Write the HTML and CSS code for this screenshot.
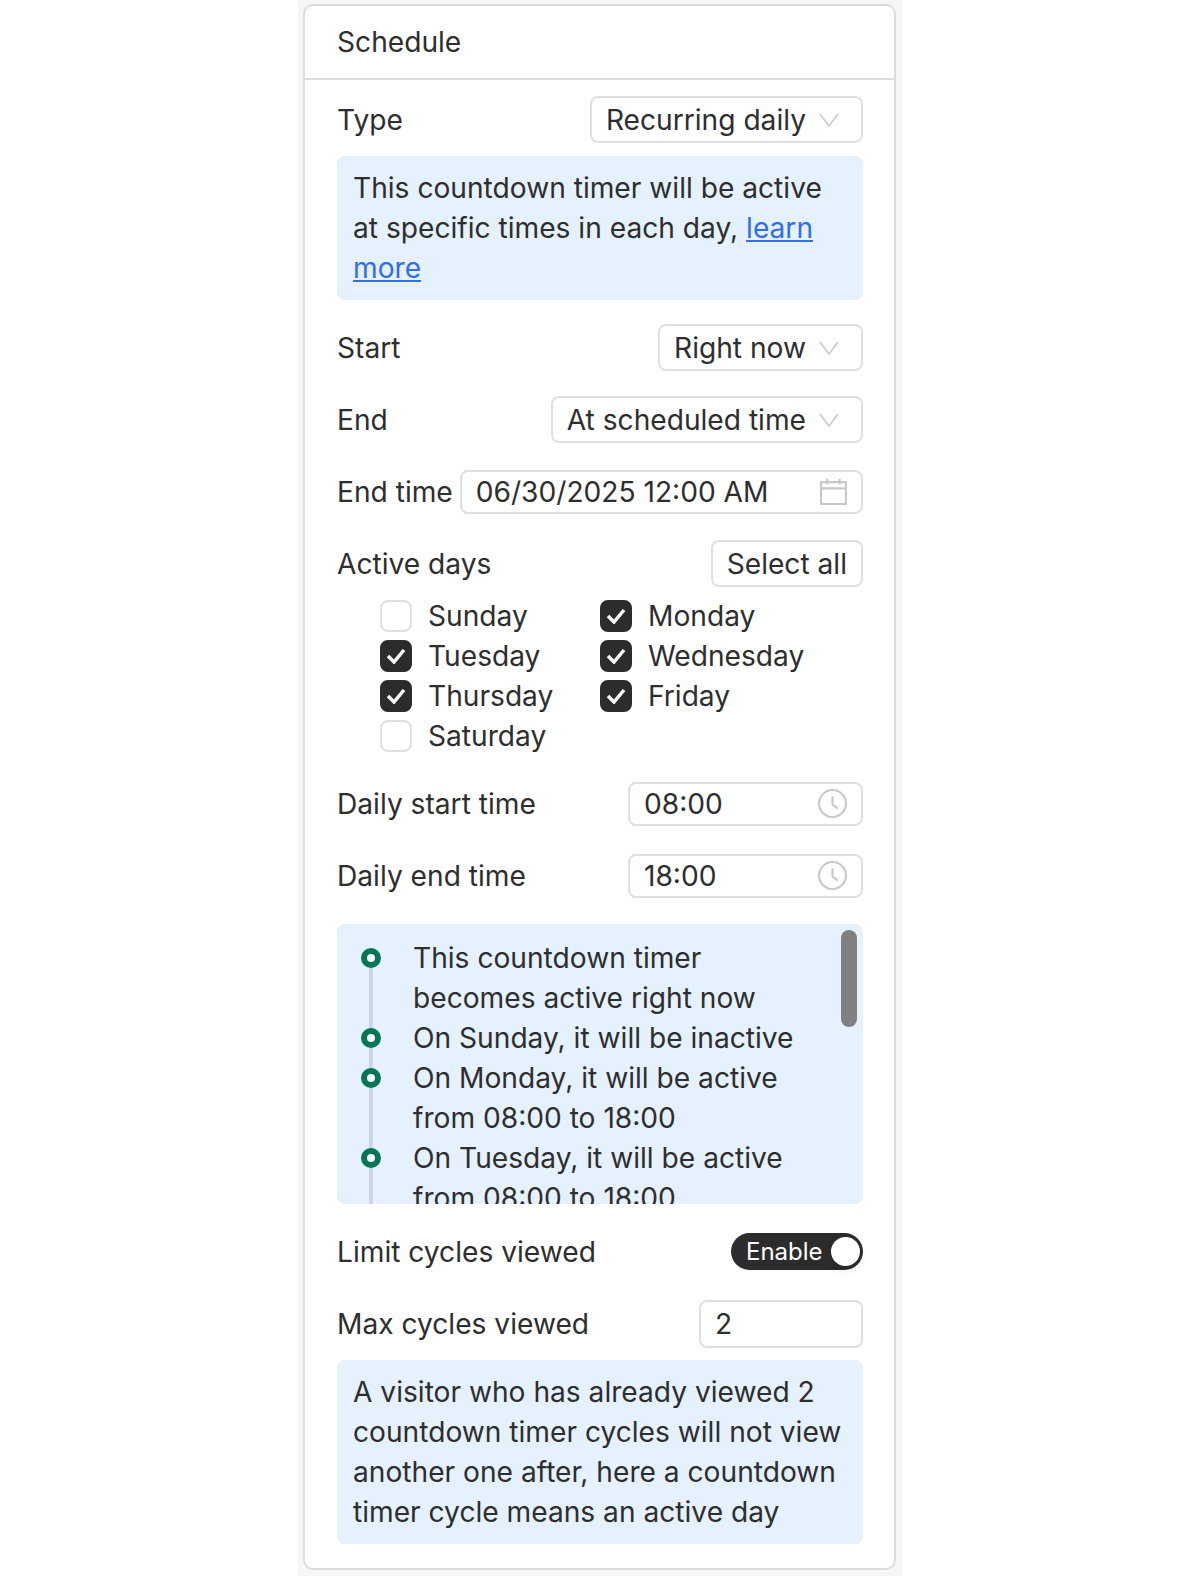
FILE: index.html
```html
<!DOCTYPE html>
<html lang="en">
<head>
    <meta charset="UTF-8">
    <meta name="viewport" content="width=device-width, initial-scale=1.0">
    <title>Schedule</title>
    <link rel="stylesheet" href="styles.css">
</head>
<body>
    <div class="panel">
        <div class="card">
            <div class="card-header">Schedule</div>
            <div class="card-body">
                <div class="row row-tight">
                    <span>Type</span>
                    <div class="field select">
                        <span>Recurring daily</span>
                        <svg class="chevron" viewBox="0 0 20 14"><path d="M1 1l9 12 9-12"/></svg>
                    </div>
                </div>
                <div class="info info-spaced">
                    This countdown timer will be active at specific times in each day, <a href="#">learn more</a>
                </div>
                <div class="row">
                    <span>Start</span>
                    <div class="field select">
                        <span>Right now</span>
                        <svg class="chevron" viewBox="0 0 20 14"><path d="M1 1l9 12 9-12"/></svg>
                    </div>
                </div>
                <div class="row">
                    <span>End</span>
                    <div class="field select">
                        <span>At scheduled time</span>
                        <svg class="chevron" viewBox="0 0 20 14"><path d="M1 1l9 12 9-12"/></svg>
                    </div>
                </div>
                <div class="row">
                    <span>End time</span>
                    <div class="field input input-grow">
                        <span>06/30/2025 12:00 AM</span>
                        <svg class="icon" viewBox="0 0 26 26"><path d="M1 4h24v21H1zM1 10h24M7 1v5M19 1v5"/></svg>
                    </div>
                </div>
                <div class="row row-days">
                    <span>Active days</span>
                    <div class="field select">Select all</div>
                </div>
                <div class="days">
                    <div class="day"><span class="check"></span>Sunday</div>
                    <div class="day"><span class="check checked"><svg viewBox="0 0 20 16"><path d="M2 8l6 6L18 2"/></svg></span>Monday</div>
                    <div class="day"><span class="check checked"><svg viewBox="0 0 20 16"><path d="M2 8l6 6L18 2"/></svg></span>Tuesday</div>
                    <div class="day"><span class="check checked"><svg viewBox="0 0 20 16"><path d="M2 8l6 6L18 2"/></svg></span>Wednesday</div>
                    <div class="day"><span class="check checked"><svg viewBox="0 0 20 16"><path d="M2 8l6 6L18 2"/></svg></span>Thursday</div>
                    <div class="day"><span class="check checked"><svg viewBox="0 0 20 16"><path d="M2 8l6 6L18 2"/></svg></span>Friday</div>
                    <div class="day"><span class="check"></span>Saturday</div>
                </div>
                <div class="row">
                    <span>Daily start time</span>
                    <div class="field input input-time">
                        <span>08:00</span>
                        <svg class="icon icon-clock" viewBox="0 0 28 28"><circle cx="14" cy="14" r="13"/><path d="M14 7v8l5 4"/></svg>
                    </div>
                </div>
                <div class="row">
                    <span>Daily end time</span>
                    <div class="field input input-time">
                        <span>18:00</span>
                        <svg class="icon icon-clock" viewBox="0 0 28 28"><circle cx="14" cy="14" r="13"/><path d="M14 7v8l5 4"/></svg>
                    </div>
                </div>
                <div class="timeline-box">
                    <ul class="timeline">
                        <li>This countdown timer becomes active right now</li>
                        <li>On Sunday, it will be inactive</li>
                        <li>On Monday, it will be active from 08:00 to 18:00</li>
                        <li>On Tuesday, it will be active from 08:00 to 18:00</li>
                    </ul>
                    <div class="thumb"></div>
                </div>
                <div class="row">
                    <span>Limit cycles viewed</span>
                    <div class="toggle">Enable<span class="knob"></span></div>
                </div>
                <div class="row row-tight">
                    <span>Max cycles viewed</span>
                    <div class="field input input-number">2</div>
                </div>
                <div class="info">
                    A visitor who has already viewed 2 countdown timer cycles will not view another one after, here a countdown timer cycle means an active day
                </div>
            </div>
        </div>
    </div>
</body>
</html>
```

FILE: styles.css
```css
body {
    font-family: Inter, "Liberation Sans", sans-serif;
    font-size: 28.15px;
    line-height: 40px;
    color: #2e2e2e;
    margin: 0;
    padding: 0;
    background-color: #fff;
}
.panel {
    width: 593px;
    margin: 0 auto;
    padding: 4px 6px 15px 5px;
    background-color: #f6f6f8;
}
.card {
    border: 2px solid #dcdcdc;
    border-radius: 10px;
    background-color: #fff;
}
.card-header {
    height: 72px;
    padding: 0 32px;
    display: flex;
    align-items: center;
    border-bottom: 2px solid #dcdcdc;
}
.card-body {
    padding: 16px 31px 24px 32px;
}
.row {
    display: flex;
    justify-content: space-between;
    align-items: center;
    height: 47px;
    margin-bottom: 25px;
}
.row-tight {
    margin-bottom: 13px;
}
.row-days {
    margin-bottom: 9px;
}
.field {
    box-sizing: border-box;
    display: flex;
    align-items: center;
    justify-content: space-between;
    border: 2px solid #e0e0e0;
    border-radius: 8px;
    background-color: #fff;
    padding: 0 14px;
}
.select {
    height: 47px;
    gap: 13px;
    padding: 0 22px 0 14px;
}
.row-days .select {
    padding: 0 14px;
}
.input {
    height: 44px;
}
.input-grow {
    flex: 1;
    margin-left: 7px;
}
.input-time {
    width: 235px;
}
.input-number {
    width: 164px;
    height: 48px;
}
.chevron {
    width: 20px;
    height: 14px;
    fill: none;
    stroke: #c8c8c8;
    stroke-width: 1.5;
}
.icon {
    width: 27px;
    height: 27px;
    fill: none;
    stroke: #c8c8c8;
    stroke-width: 2;
}
.icon-clock {
    width: 29px;
    height: 29px;
}
.info {
    padding: 12px 16px;
    border-radius: 8px;
    background-color: #e5f1fe;
}
.info-spaced {
    margin-bottom: 24px;
}
.info a {
    color: #2f6fed;
}
.days {
    display: grid;
    grid-template-columns: 220px 1fr;
    padding-left: 43px;
    margin-bottom: 24px;
}
.day {
    display: flex;
    align-items: center;
    gap: 16px;
}
.check {
    box-sizing: border-box;
    width: 32px;
    height: 32px;
    display: flex;
    align-items: center;
    justify-content: center;
    border: 2px solid #e0e0e0;
    border-radius: 8px;
}
.checked {
    border-color: #2c2c2c;
    background-color: #2c2c2c;
}
.checked svg {
    width: 20px;
    height: 16px;
    fill: none;
    stroke: #fff;
    stroke-width: 3.5;
}
.timeline-box {
    position: relative;
    height: 280px;
    overflow: hidden;
    margin-bottom: 24px;
    border-radius: 8px;
    background-color: #e5f1fe;
}
.timeline {
    list-style: none;
    margin: 0;
    padding: 14px 48px 0 76px;
}
.timeline li {
    position: relative;
}
.timeline li::before {
    content: "";
    position: absolute;
    left: -44px;
    top: 20px;
    bottom: -20px;
    width: 4px;
    background-color: #cdd5e3;
}
.timeline li::after {
    content: "";
    position: absolute;
    left: -52px;
    top: 10px;
    box-sizing: border-box;
    width: 20px;
    height: 20px;
    border: 6px solid #067655;
    border-radius: 50%;
    background-color: #fff;
}
.thumb {
    position: absolute;
    top: 6px;
    right: 6px;
    width: 16px;
    height: 97px;
    border-radius: 8px;
    background-color: #808080;
}
.toggle {
    box-sizing: border-box;
    width: 132px;
    height: 37px;
    display: flex;
    align-items: center;
    justify-content: space-between;
    padding: 0 3px 0 15px;
    border-radius: 19px;
    background-color: #2c2c2c;
    color: #fff;
    font-size: 24px;
}
.knob {
    width: 29px;
    height: 29px;
    border-radius: 50%;
    background-color: #fff;
    box-shadow: 0 4px 10px rgba(0, 0, 0, 0.1);
}
```
